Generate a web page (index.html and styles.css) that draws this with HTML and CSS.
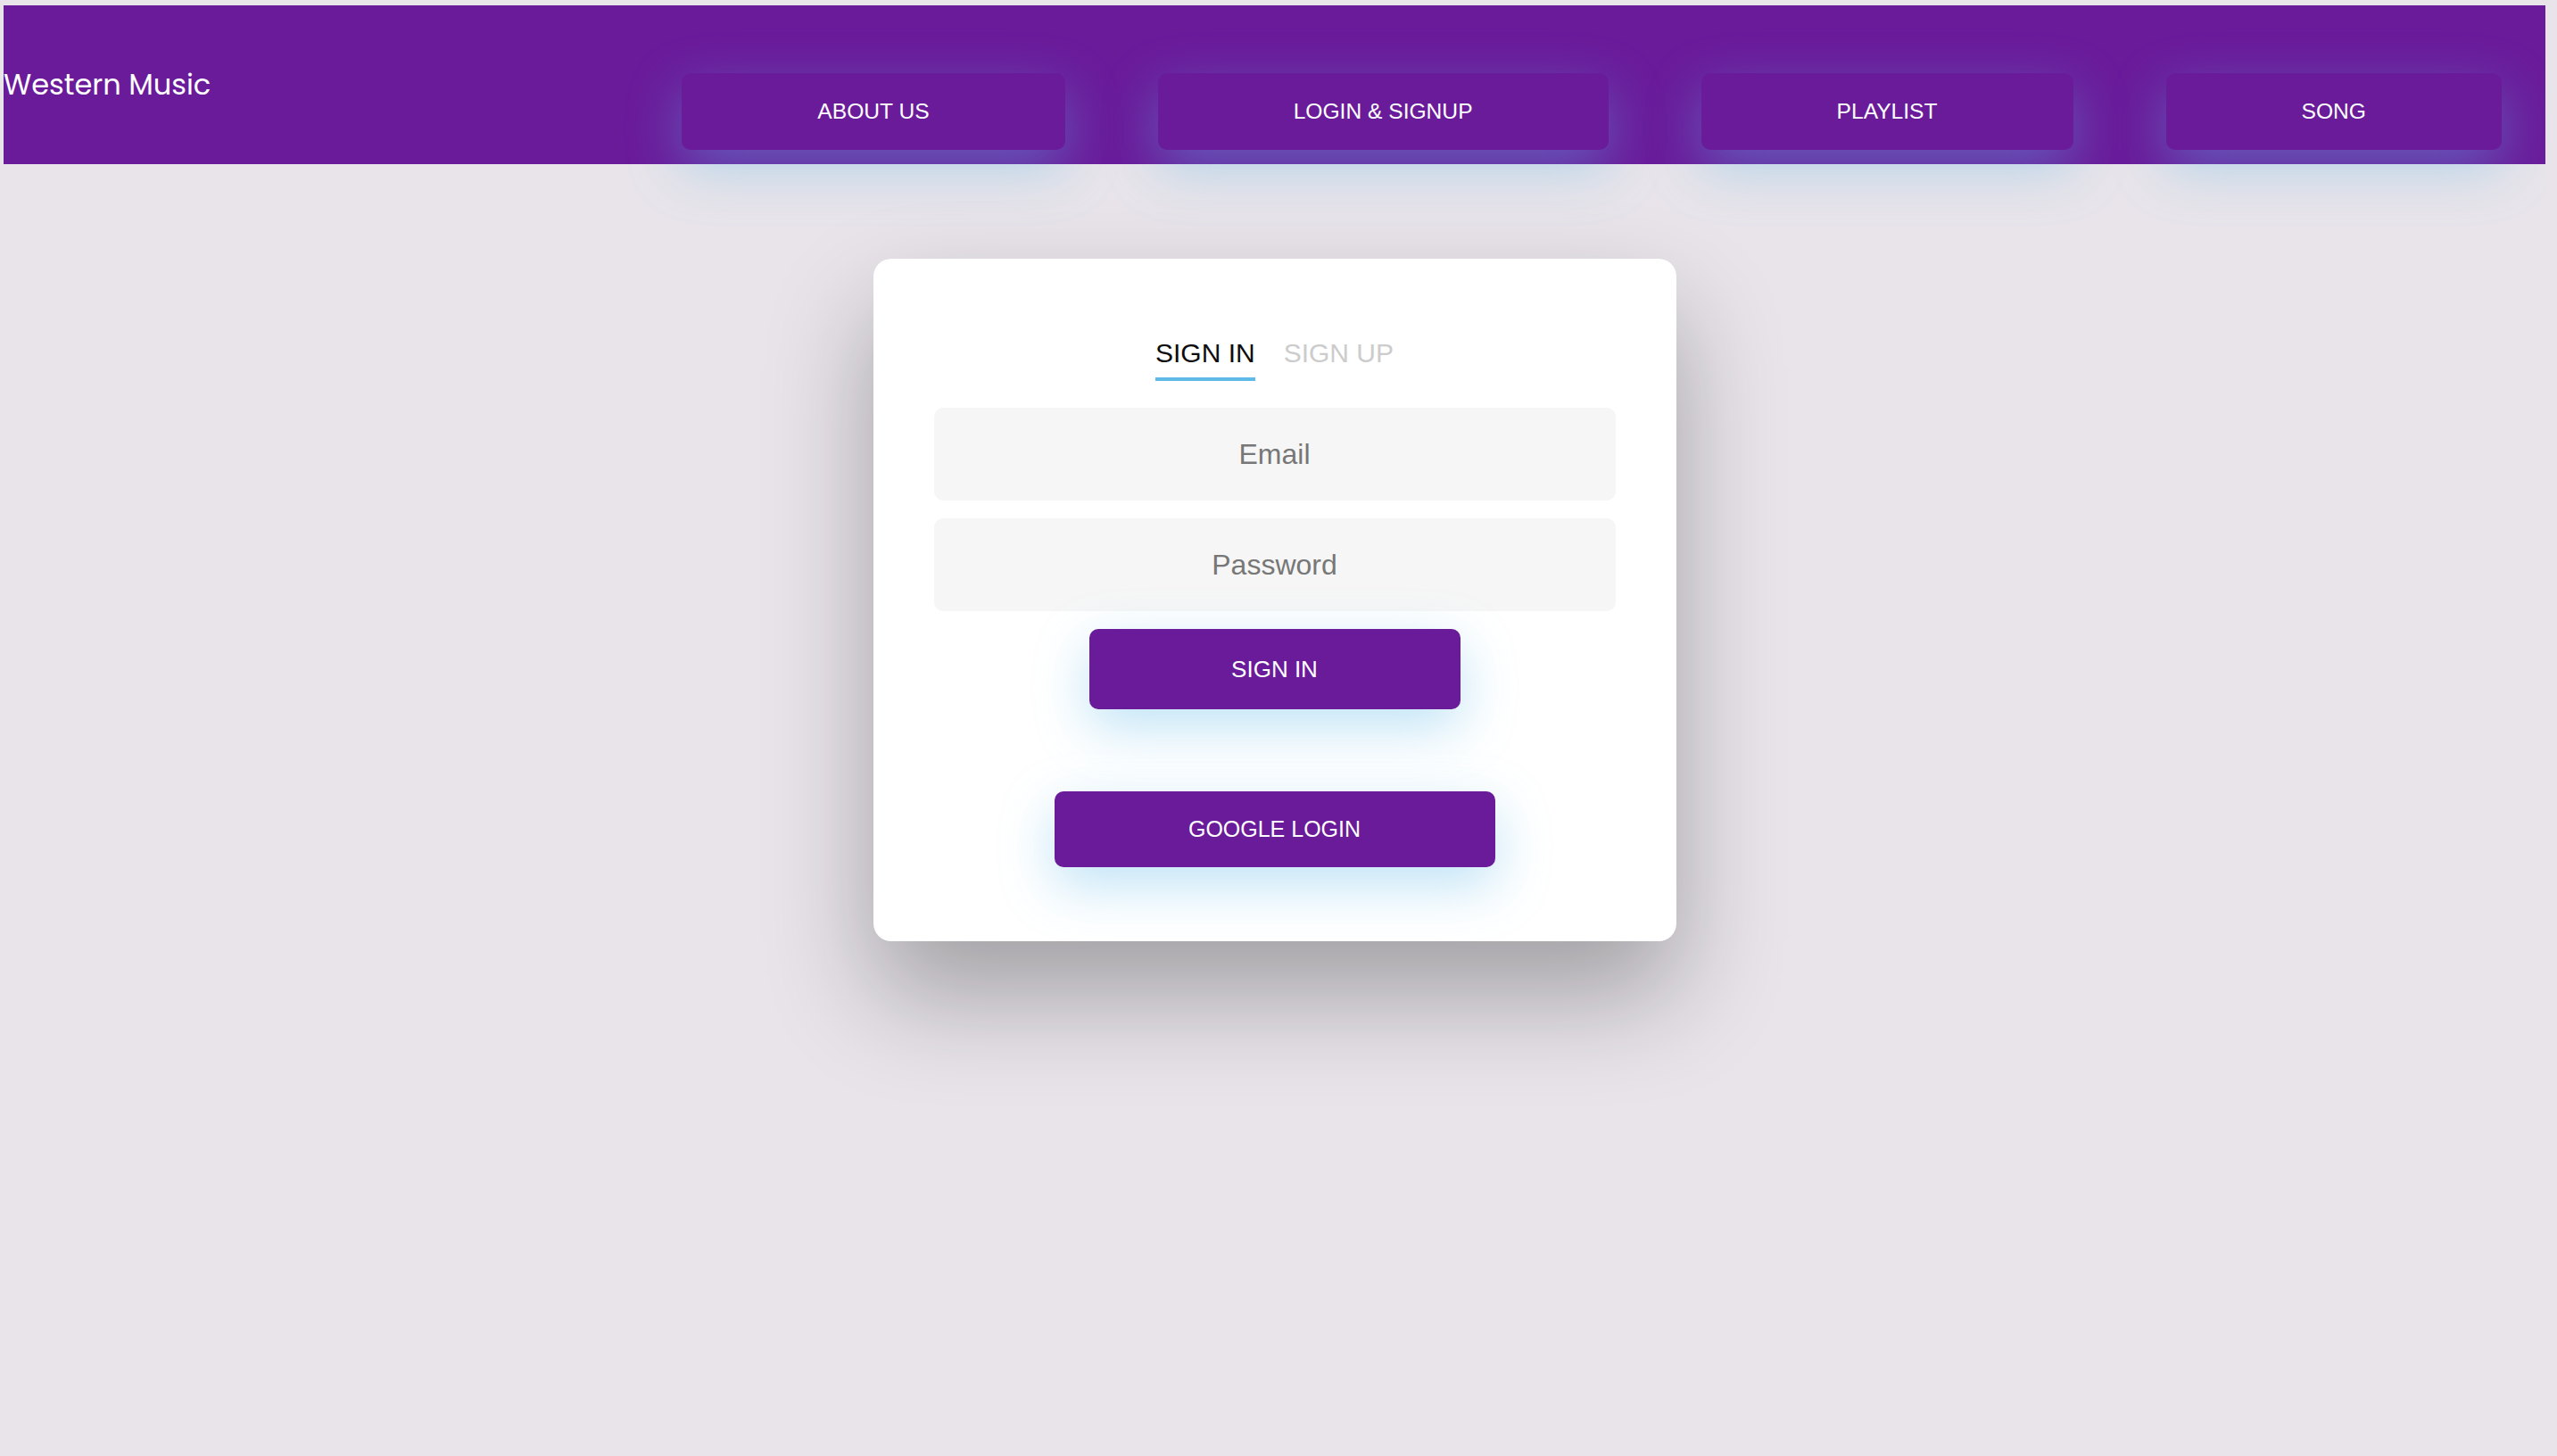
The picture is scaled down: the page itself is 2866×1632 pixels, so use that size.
FILE: index.html
```html
<!DOCTYPE html>
<html lang="en">
<head>
    <meta charset="UTF-8">
    <meta name="viewport" content="width=device-width, initial-scale=1.0">
    <title>Western Music - Login</title>
    <link rel="stylesheet" href="styles.css">
</head>
<body>
    <header class="topbar">
        <div class="logo">Western Music</div>
        <nav>
            <ul class="nav-list">
                <li><a href="#" class="nav-btn">ABOUT US</a></li>
                <li><a href="#" class="nav-btn">LOGIN &amp; SIGNUP</a></li>
                <li><a href="#" class="nav-btn">PLAYLIST</a></li>
                <li><a href="#" class="nav-btn">SONG</a></li>
            </ul>
        </nav>
    </header>

    <!-- Login card -->
    <div class="wrapper">
        <div class="form-content">
            <div class="tabs">
                <h2 class="tab active">SIGN IN</h2>
                <h2 class="tab inactive">SIGN UP</h2>
            </div>
            <form class="login-form">
                <input type="text" class="field" placeholder="Email">
                <input type="password" class="field" placeholder="Password">
                <button type="button" class="submit-btn">SIGN IN</button>
            </form>
            <button type="button" class="google-btn">GOOGLE LOGIN</button>
        </div>
    </div>
</body>
</html>
```

FILE: styles.css
```css
*{
    box-sizing: border-box;
    margin: 0;
    padding: 0;
}

body {
    font-family: "Liberation Sans", Arial, sans-serif;
    background: #e8e4ea;
    margin: 6px 13px 0 4px;
    min-height: calc(100vh - 6px);
}

.topbar {
    display: flex;
    align-items: center;
    height: 178px;
    background: #6a1b9a;
}
.logo {
    font-family: "Poppins", "Lato", sans-serif;
    font-size: 32px;
    color: #fff;
}
nav {
    margin-left: auto;
}
.nav-list {
    list-style: none;
    display: flex;
    gap: 104px;
    margin: 60px 49px 0 auto;
}
.nav-btn {
    display: block;
    height: 86px;
    line-height: 86px;
    padding: 0 152px;
    font-size: 24.6px;
    color: #fff;
    text-decoration: none;
    background: #6a1b9a;
    border-radius: 10px;
    box-shadow: 0 20px 60px 0 rgba(95, 186, 233, 0.4);
}

.wrapper {
    display: flex;
    justify-content: center;
    margin-top: 106px;
}
.form-content {
    width: 900px;
    background: #fff;
    border-radius: 20px;
    padding-bottom: 83px;
    box-shadow: 0 60px 120px 0 rgba(0, 0, 0, 0.3);
    display: flex;
    flex-direction: column;
    align-items: center;
}
.tabs {
    display: flex;
    justify-content: center;
    gap: 32px;
    margin: 89px 0 30px;
}
.tab {
    font-size: 30px;
    font-weight: normal;
    padding-bottom: 10px;
    border-bottom: 4px solid transparent;
}
.tab.active {
    color: #0d0d0d;
    border-bottom-color: #5fbae9;
}
.tab.inactive {
    color: #cccccc;
}
.login-form {
    display: flex;
    flex-direction: column;
    align-items: center;
    gap: 20px;
    width: 100%;
}
.field {
    width: 764px;
    height: 104px;
    background: #f6f6f6;
    border: 4px solid #f6f6f6;
    border-radius: 10px;
    font-family: "Liberation Sans", Arial, sans-serif;
    font-size: 32px;
    text-align: center;
    color: #0d0d0d;
}
.field::placeholder {
    color: #777;
}
.submit-btn, .google-btn {
    background: #6a1b9a;
    color: #fff;
    border: none;
    border-radius: 10px;
    font-family: "Liberation Sans", Arial, sans-serif;
    cursor: pointer;
    box-shadow: 0 20px 60px 0 rgba(95, 186, 233, 0.4);
}
.submit-btn {
    width: 416px;
    height: 90px;
    font-size: 26px;
}
.google-btn {
    width: 494px;
    height: 85px;
    font-size: 25px;
    margin-top: 92px;
}
```
